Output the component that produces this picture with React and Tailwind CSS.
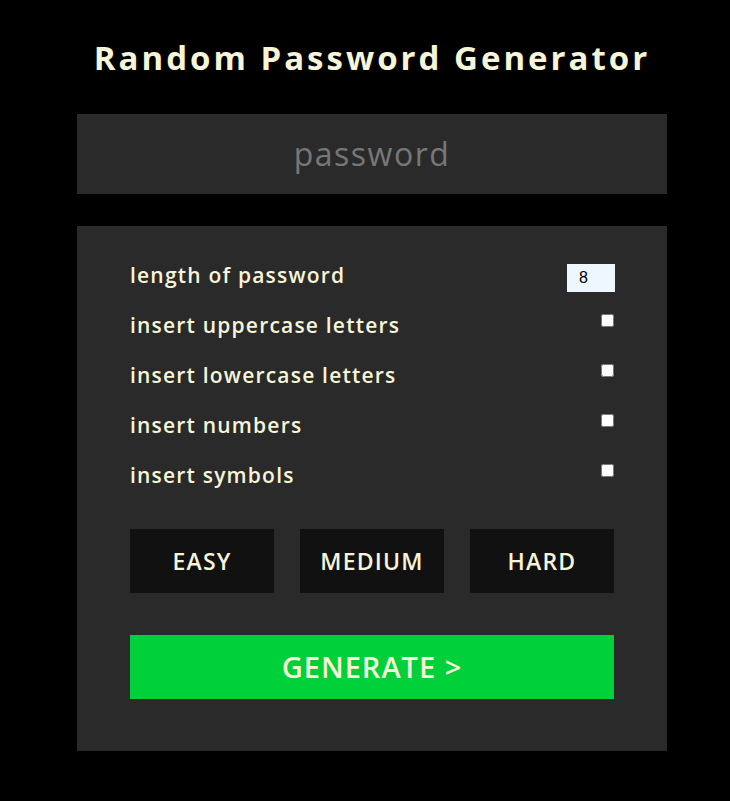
import { useState } from "react";

const font = { fontFamily: '"Open Sans", "Liberation Sans", sans-serif' };

export default function App() {
  const [length, setLength] = useState(8);
  const [options, setOptions] = useState({
    upper: false,
    lower: false,
    numbers: false,
    symbols: false,
  });

  const rows = [
    { key: "upper", label: "insert uppercase letters" },
    { key: "lower", label: "insert lowercase letters" },
    { key: "numbers", label: "insert numbers" },
    { key: "symbols", label: "insert symbols" },
  ];

  return (
    <div className="min-h-[801px] bg-black text-[#f7f5d8]" style={font}>
      <div className="w-[590px] ml-[77px] pt-[35px]">
        {/* Title */}
        <h1 className="h-[44px] flex items-center justify-center text-[33px] font-bold tracking-[3px] leading-none">
          Random Password Generator
        </h1>

        {/* Output */}
        <div className="mt-[35px] h-[80px] bg-[#2a2a2a] flex items-center justify-center">
          <span className="text-[32px] tracking-[1.5px] text-[#777777]">password</span>
        </div>

        {/* Settings */}
        <div className="mt-[32px] bg-[#2a2a2a] px-[53px] pt-[25px] pb-[52px]">
          <div className="h-[50px] flex items-center justify-between">
            <span className="text-[21px] font-semibold tracking-[1.2px]">length of password</span>
            <input
              type="number"
              value={length}
              onChange={(e) => setLength(e.target.value)}
              className="w-[48px] h-[28px] bg-[#eef6ff] text-black text-[16px] pl-[12px] outline-none mr-[-1px] mt-[3px] [appearance:textfield]"
              style={{ fontFamily: '"Liberation Sans", Arial, sans-serif' }}
            />
          </div>
          {rows.map((r) => (
            <div key={r.key} className="h-[50px] flex items-center justify-between">
              <span className="text-[21px] font-semibold tracking-[1.2px]">{r.label}</span>
              <input
                type="checkbox"
                checked={options[r.key]}
                onChange={() => setOptions({ ...options, [r.key]: !options[r.key] })}
                className="w-[13px] h-[13px] mb-[12px]"
              />
            </div>
          ))}

          <div className="mt-[28px] flex justify-between">
            {["EASY", "MEDIUM", "HARD"].map((d) => (
              <button
                key={d}
                className="w-[144px] h-[64px] bg-[#111111] text-[23px] font-semibold tracking-[1.2px]"
              >
                {d}
              </button>
            ))}
          </div>

          <button className="mt-[42px] w-full h-[64px] bg-[#00d13a] text-[29px] font-semibold tracking-[1px]">
            GENERATE &gt;
          </button>
        </div>
      </div>
    </div>
  );
}
